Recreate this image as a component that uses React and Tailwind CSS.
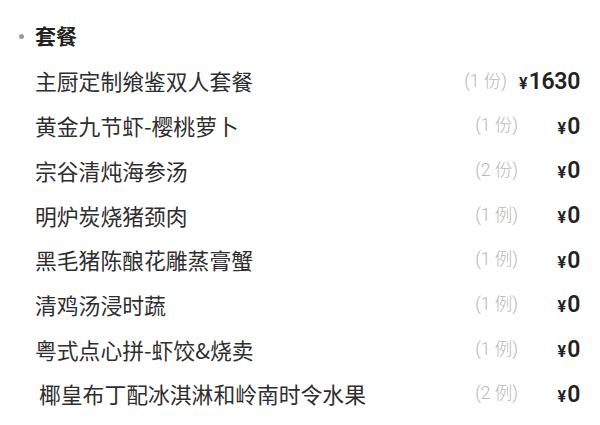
import React from "react";

const items = [
  { name: "主厨定制飨鉴双人套餐", qty: "(1 份)", price: "1630" },
  { name: "黄金九节虾-樱桃萝卜", qty: "(1 份)", price: "0" },
  { name: "宗谷清炖海参汤", qty: "(2 份)", price: "0" },
  { name: "明炉炭烧猪颈肉", qty: "(1 例)", price: "0" },
  { name: "黑毛猪陈酿花雕蒸膏蟹", qty: "(1 例)", price: "0" },
  { name: "清鸡汤浸时蔬", qty: "(1 例)", price: "0" },
  { name: "粤式点心拼-虾饺&烧卖", qty: "(1 例)", price: "0" },
  { name: "椰皇布丁配冰淇淋和岭南时令水果", qty: "(2 例)", price: "0", indent: true },
];

export default function App() {
  return (
    <div
      className="w-[600px] h-[425px] bg-white overflow-hidden"
      style={{ fontFamily: '"Noto Sans CJK SC", "Noto Sans", sans-serif' }}
    >
      <div className="pt-[21px] pl-[19px] pr-[20px]">
        <div className="flex items-center h-[30px]">
          <span className="w-[5px] h-[5px] rounded-full bg-[#9a9a9a] mr-[11px]" />
          <span className="text-[21px] font-bold text-[#222]">套餐</span>
        </div>
        <div className="pl-[16px] mt-[8px]">
          {items.map((it, i) => (
            <div key={i} className="flex items-center h-[44.7px]">
              <span
                className={
                  "flex-1 text-[21.8px] text-[#2e2e2e] leading-none " +
                  (it.indent ? "pl-[4px]" : "")
                }
              >
                {it.name}
              </span>
              <span
                className="text-[17.5px] text-[#b8b8b8] leading-none font-light"
                style={{ fontFamily: 'Roboto, "Noto Sans CJK SC", sans-serif' }}
              >
                {it.qty}
              </span>
              <span
                className="ml-[12px] min-w-[50px] text-right text-[#222] font-semibold leading-none"
                style={{ fontFamily: 'Roboto, "Noto Sans CJK SC", sans-serif' }}
              >
                <span className="text-[16px] font-bold mr-[1px]">¥</span>
                <span className="text-[23px] tracking-[-0.3px]">{it.price}</span>
              </span>
            </div>
          ))}
        </div>
      </div>
    </div>
  );
}
